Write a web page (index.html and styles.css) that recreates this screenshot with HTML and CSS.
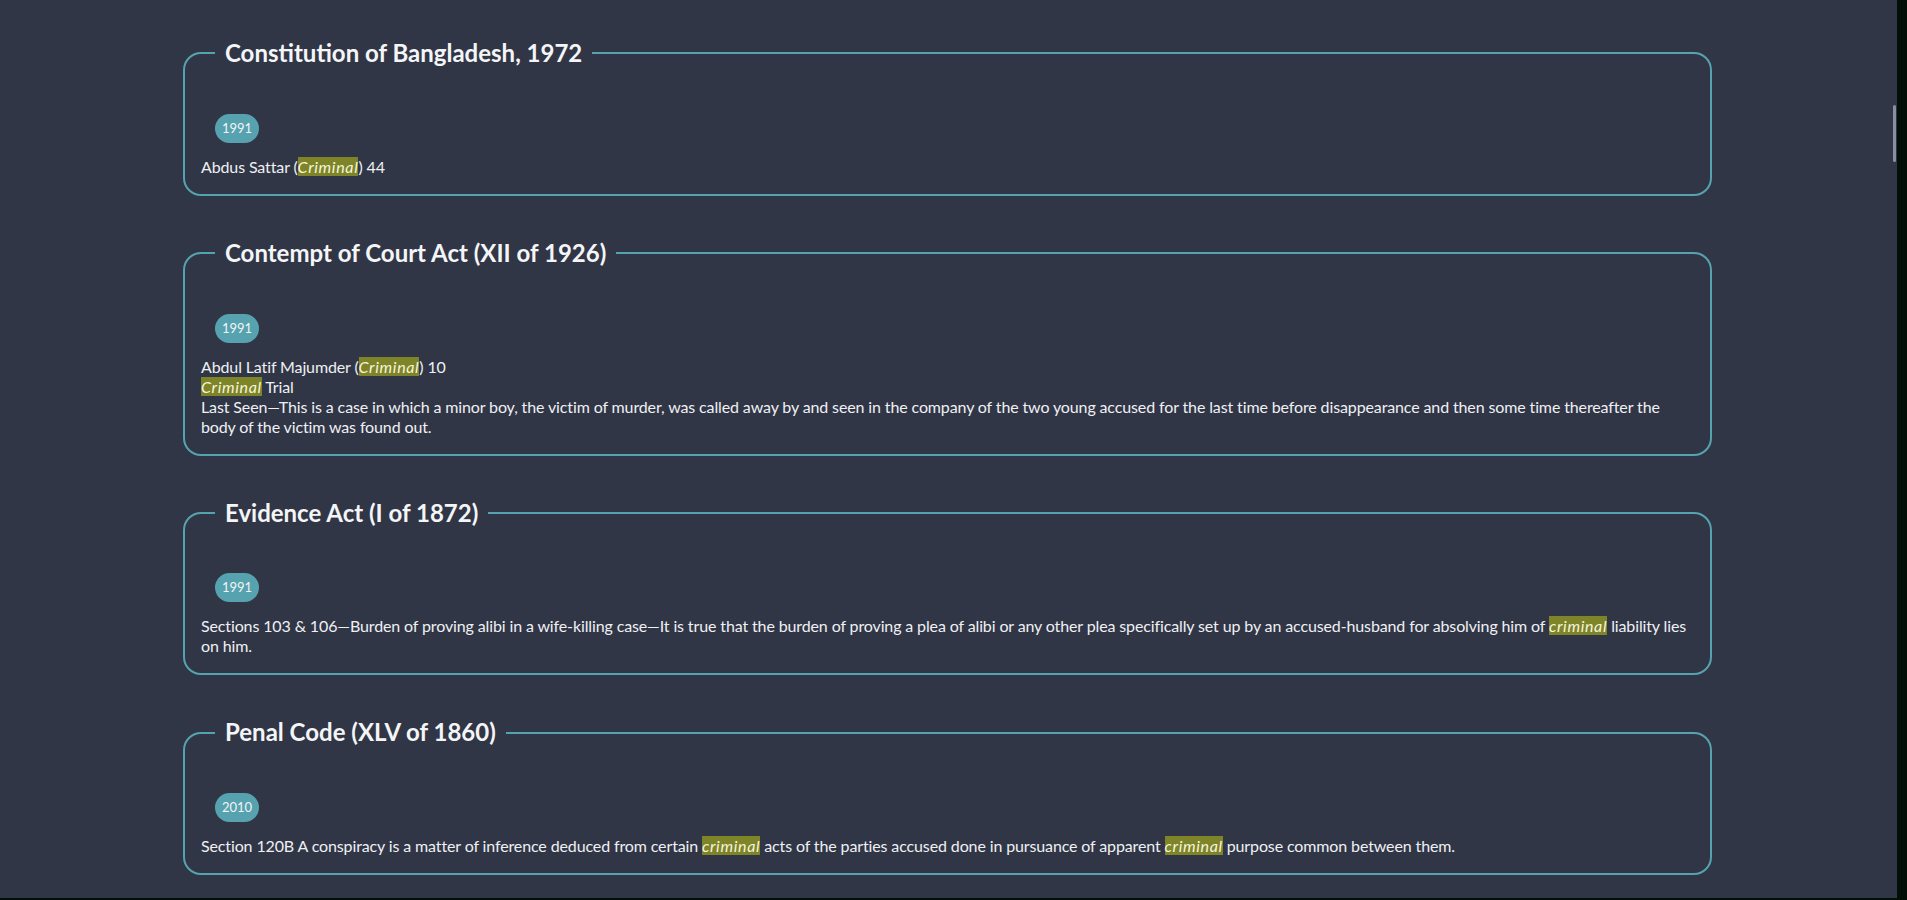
FILE: index.html
```html
<!DOCTYPE html>
<html lang="en">
<head>
<meta charset="utf-8">
<title>Search results</title>
<link rel="stylesheet" href="styles.css">
</head>
<body>
<div class="frame">
  <main class="page">
    <div class="results">
      <fieldset class="act">
        <legend class="act-title">Constitution of Bangladesh, 1972</legend>
        <div class="year-row"><span class="year">1991</span></div>
        <div class="entry">
          <div class="line">Abdus Sattar (<mark class="hl"><em>Criminal</em></mark>) 44</div>
        </div>
      </fieldset>

      <fieldset class="act">
        <legend class="act-title">Contempt of Court Act (XII of 1926)</legend>
        <div class="year-row"><span class="year">1991</span></div>
        <div class="entry">
          <div class="line">Abdul Latif Majumder (<mark class="hl"><em>Criminal</em></mark>) 10</div>
          <div class="line"><mark class="hl"><em>Criminal</em></mark> Trial</div>
          <div class="line">Last Seen—This is a case in which a minor boy, the victim of murder, was called away by and seen in the company of the two young accused for the last time before disappearance and then some time thereafter the body of the victim was found out.</div>
        </div>
      </fieldset>

      <fieldset class="act">
        <legend class="act-title">Evidence Act (I of 1872)</legend>
        <div class="year-row"><span class="year">1991</span></div>
        <div class="entry">
          <div class="line">Sections 103 &amp; 106—Burden of proving alibi in a wife-killing case—It is true that the burden of proving a plea of alibi or any other plea specifically set up by an accused-husband for absolving him of <mark class="hl"><em>criminal</em></mark> liability lies on him.</div>
        </div>
      </fieldset>

      <fieldset class="act">
        <legend class="act-title">Penal Code (XLV of 1860)</legend>
        <div class="year-row"><span class="year">2010</span></div>
        <div class="entry">
          <div class="line">Section 120B A conspiracy is a matter of inference deduced from certain <mark class="hl"><em>criminal</em></mark> acts of the parties accused done in pursuance of apparent <mark class="hl"><em>criminal</em></mark> purpose common between them.</div>
        </div>
      </fieldset>

      <fieldset class="act">
        <legend class="act-title">Code of Criminal Procedure (V of 1898)</legend>
        <div class="year-row"><span class="year">2010</span></div>
        <div class="entry">
          <div class="line">Section 342</div>
        </div>
      </fieldset>
    </div>
    <div class="thumb"></div>
  </main>
  <div class="gutter"></div>
</div>
</body>
</html>
```

FILE: styles.css
```css
html, body {
  margin: 0;
  padding: 0;
  height: 100%;
  overflow: hidden;
  background: #020e06;
}

body {
  font-family: Lato, "Open Sans", sans-serif;
  color: #eef0f4;
}

.frame {
  display: flex;
  height: 898px;
}

.page {
  position: relative;
  flex: 1;
  background: #313646;
  overflow: hidden;
}

.gutter {
  width: 10px;
  flex: none;
  background: #020e06;
}

.thumb {
  position: absolute;
  right: 1px;
  top: 105px;
  width: 3px;
  height: 57px;
  border-radius: 2px;
  background: #8b8f9f;
}

.results {
  width: 1529px;
  margin-left: 183px;
  padding-top: 39px;
  display: flex;
  flex-direction: column;
  gap: 43px;
}

.act {
  margin: 0;
  padding: 0 16px 17px 16px;
  border: 2px solid #56a3b0;
  border-radius: 18px;
  min-width: 0;
}

.act-title {
  margin-left: 14px;
  padding: 0 10px;
  font-size: 24px;
  font-weight: 700;
  line-height: 1.2;
  color: #f4f5f7;
}

.year-row {
  display: flex;
  padding: 46px 0 14px 14px;
}

.year {
  display: block;
  padding: 6px 7px;
  border-radius: 15px;
  background: #56a2af;
  color: #f2f4f6;
  font-size: 13px;
  line-height: 17px;
}

.entry {
  font-size: 16px;
  line-height: 20px;
  letter-spacing: -0.125px;
}

.hl {
  background: #7e8428;
  color: #f6f4dc;
}

.hl em {
  font-style: italic;
  letter-spacing: 0.65px;
}
```
